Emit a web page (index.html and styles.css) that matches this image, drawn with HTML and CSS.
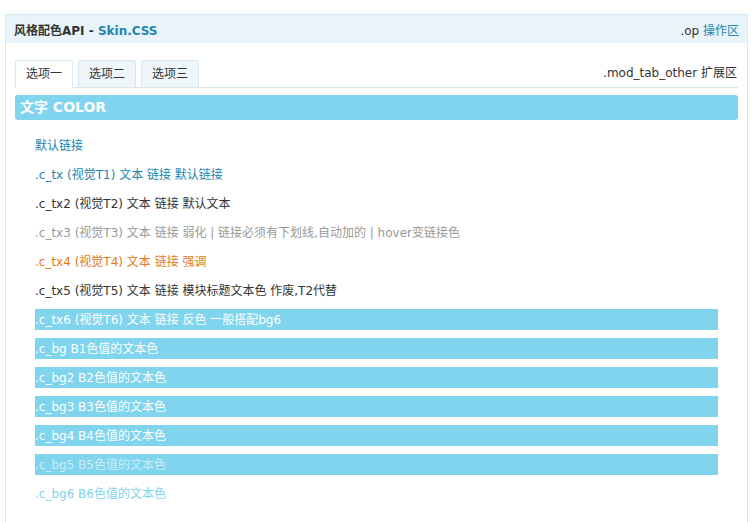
FILE: index.html
```html
<!DOCTYPE html>
<html lang="zh">
<head>
<meta charset="utf-8">
<title>风格配色API - Skin.CSS</title>
<link rel="stylesheet" href="styles.css">
</head>
<body>
<div class="mod">
  <div class="mod_hd">
    <h3 class="mod_title">风格配色API - <a class="title_link" href="#">Skin.CSS</a></h3>
    <div class="op">.op <a class="c_tx" href="#">操作区</a></div>
  </div>
  <div class="mod_bd">
    <div class="mod_tab">
      <ul class="tabs">
        <li class="tab active">选项一</li>
        <li class="tab">选项二</li>
        <li class="tab">选项三</li>
      </ul>
      <div class="mod_tab_other">.mod_tab_other 扩展区</div>
    </div>
    <div class="section_title">文字 COLOR</div>
    <ul class="rows">
      <li class="row"><a class="c_tx" href="#">默认链接</a></li>
      <li class="row c_tx">.c_tx (视觉T1) 文本 链接 默认链接</li>
      <li class="row c_tx2">.c_tx2 (视觉T2) 文本 链接 默认文本</li>
      <li class="row c_tx3">.c_tx3 (视觉T3) 文本 链接 弱化 | 链接必须有下划线,自动加的 | hover变链接色</li>
      <li class="row c_tx4">.c_tx4 (视觉T4) 文本 链接 强调</li>
      <li class="row c_tx5">.c_tx5 (视觉T5) 文本 链接 模块标题文本色 作废,T2代替</li>
      <li class="row bar c_tx6">.c_tx6 (视觉T6) 文本 链接 反色 一般搭配bg6</li>
      <li class="row bar c_bg">.c_bg B1色值的文本色</li>
      <li class="row bar c_bg">.c_bg2 B2色值的文本色</li>
      <li class="row bar c_bg">.c_bg3 B3色值的文本色</li>
      <li class="row bar c_bg">.c_bg4 B4色值的文本色</li>
      <li class="row bar c_bg5">.c_bg5 B5色值的文本色</li>
      <li class="row c_bg6">.c_bg6 B6色值的文本色</li>
    </ul>
  </div>
</div>
</body>
</html>
```

FILE: styles.css
```css
* { box-sizing: border-box; }
html, body { background: #fff; }
body {
  margin: 14px 7px 0 5px;
  font-family: Tahoma, "DejaVu Sans", "Noto Sans CJK SC", sans-serif;
  font-size: 12px;
  color: #333;
}
a { text-decoration: none; color: inherit; }
ul { margin: 0; padding: 0; list-style: none; }

.mod {
  border: 1px solid #d6e9f1;
  border-bottom: none;
  height: 520px;
}
.mod_hd {
  height: 28px;
  background: #e8f4f9;
  display: flex;
  align-items: center;
  justify-content: space-between;
  padding: 1px 8px 0 8px;
}
.mod_title {
  margin: 0;
  font-size: 12px;
  font-weight: bold;
  color: #333;
}
.title_link { color: #2585ab; }
.op { color: #333; }
.c_tx, a.c_tx { color: #2585ab; }

.mod_bd { padding: 17px 9px 0 9px; }

.mod_tab {
  display: flex;
  align-items: flex-end;
  justify-content: space-between;
  border-bottom: 1px solid #d6e9f1;
  height: 28px;
}
.tabs { display: flex; gap: 5px; height: 27px; }
.tab {
  width: 58px;
  height: 27px;
  border: 1px solid #d6e9f1;
  border-bottom: none;
  border-radius: 3px 3px 0 0;
  background: #eef6fa;
  text-align: center;
  line-height: 27px;
  color: #333;
}
.tab.active {
  background: #fff;
  height: 28px;
  margin-bottom: -1px;
}
.mod_tab_other {
  align-self: center;
  padding-bottom: 4px;
  padding-right: 1px;
  color: #333;
}

.section_title {
  margin-top: 7px;
  height: 25px;
  line-height: 25px;
  background: #81d4ee;
  border-radius: 3px;
  color: #fff;
  font-weight: bold;
  font-size: 14px;
  padding-left: 5px;
}

.rows { padding: 15px 20px 0 20px; }
.row {
  height: 21px;
  line-height: 23px;
  margin-bottom: 8px;
  white-space: nowrap;
  overflow: hidden;
}
.bar { background: #81d4ee; }
.c_tx2 { color: #333; }
.c_tx3 { color: #999; }
.c_tx4 { color: #e57a18; }
.c_tx5 { color: #333; }
.c_tx6 { color: #fff; }
.c_bg { color: #fff; }
.c_bg5 { color: #c8ecf8; }
.c_bg6 { color: #81d4ee; }
```
